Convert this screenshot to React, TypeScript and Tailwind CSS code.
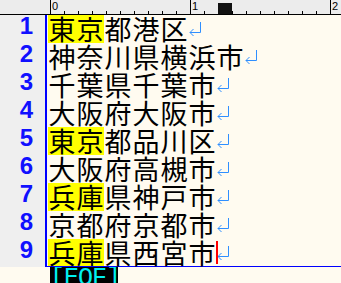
const rows: { hl: string; rest: string }[] = [
  { hl: "東京", rest: "都港区" },
  { hl: "", rest: "神奈川県横浜市" },
  { hl: "", rest: "千葉県千葉市" },
  { hl: "", rest: "大阪府大阪市" },
  { hl: "東京", rest: "都品川区" },
  { hl: "", rest: "大阪府高槻市" },
  { hl: "兵庫", rest: "県神戸市" },
  { hl: "", rest: "京都府京都市" },
  { hl: "兵庫", rest: "県西宮市" },
];

const jp = { fontFamily: '"Noto Sans CJK JP", "Noto Sans", sans-serif' };

function Chars({ text }: { text: string }) {
  return (
    <>
      {text.split("").map((c, i) => (
        <span
          key={i}
          className="inline-block h-[28px] w-[28px] text-center text-[27px] leading-[28px] text-black"
          style={jp}
        >
          {c}
        </span>
      ))}
    </>
  );
}

function ReturnMark() {
  return (
    <svg width="14" height="28" viewBox="0 0 14 28" className="shrink-0">
      <path
        d="M12.5 7 V17.5 H2 M5.5 14 L2 17.5 L5.5 21"
        fill="none"
        stroke="#2f8fff"
        strokeWidth="1"
      />
    </svg>
  );
}

function Ruler() {
  const cols = Array.from({ length: 21 }, (_, i) => i);
  return (
    <div className="flex h-[15px] border-b border-black bg-[#ececec]">
      <div className="w-[50px] shrink-0" />
      {cols.map((i) => (
        <div key={i} className="relative flex h-full w-[14px] shrink-0 items-end">
          {i === 12 && <div className="absolute bottom-0 left-0 h-[11px] w-[14px] bg-[#111]" />}
          {i % 10 === 0 ? (
            <>
              <div className="h-full w-px bg-black" />
              <span
                className="ml-[1px] self-start text-[11px] leading-[12px] text-black"
                style={{ fontFamily: '"Liberation Sans", sans-serif' }}
              >
                {i / 10}
              </span>
            </>
          ) : (
            <div className="h-[3px] w-px bg-black" />
          )}
        </div>
      ))}
    </div>
  );
}

export default function App() {
  return (
    <div className="h-[283px] w-[341px] overflow-hidden bg-[#fffbf0]">
      <Ruler />
      {rows.map((r, i) => (
        <div key={i} className="flex h-[28px]">
          <div
            className="h-[28px] w-[47px] shrink-0 border-r-2 border-[#0000ff] bg-[#efefef] pr-[12px] text-right text-[24px] font-bold leading-[22px] text-[#1010ff]"
            style={{ fontFamily: '"Liberation Sans", sans-serif' }}
          >
            {i + 1}
          </div>
          <div
            className={`relative flex flex-1 pl-[1px] ${i === rows.length - 1 ? "border-b border-[#0000ff]" : ""}`}
          >
            {r.hl && (
              <span className="flex bg-[#ffff00]">
                <Chars text={r.hl} />
              </span>
            )}
            <Chars text={r.rest} />
            <ReturnMark />
            {i === rows.length - 1 && (
              <div className="absolute left-[169px] top-[2px] h-[23px] w-[2px] bg-[#ff0000]" />
            )}
          </div>
        </div>
      ))}
      <div className="flex pl-[50px]">
        <div
          className="h-[28px] w-[68px] bg-black text-[25px] leading-[24px] text-[#00f0f0]"
          style={{ fontFamily: '"Liberation Mono", monospace', letterSpacing: "-1px" }}
        >
          [EOF]
        </div>
      </div>
    </div>
  );
}
